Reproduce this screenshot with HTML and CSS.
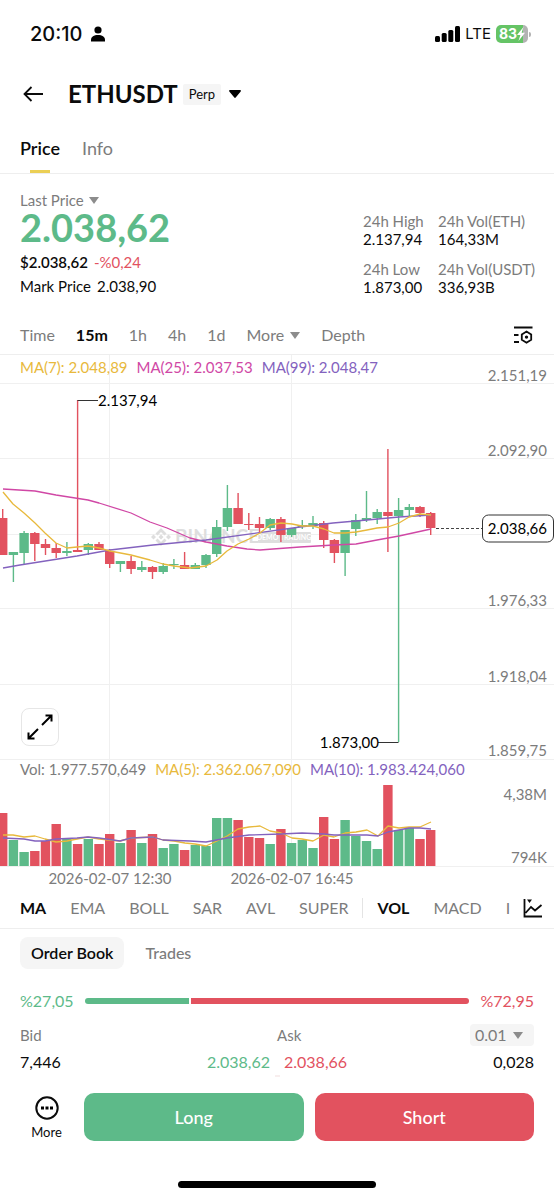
FILE: index.html
```html
<!DOCTYPE html>
<html lang="en">
<head>
    <meta charset="UTF-8">
    <meta name="viewport" content="width=device-width, initial-scale=1.0">
    <title>ETHUSDT Perp</title>
    <link rel="stylesheet" href="styles.css">
</head>
<body>
    <div class="status-bar">
        <div class="status-left">
            <span class="clock">20:10</span>
            <svg width="14" height="16" viewBox="0 0 14 16"><circle cx="7" cy="4" r="3.6"/><path d="M0 15.4V14c0-3 3-4.900 7-4.900s7 1.900 7 4.900v1.400z"/></svg>
        </div>
        <div class="status-right">
            <svg width="25" height="16" viewBox="0 0 25 16"><rect y="10" width="5" height="6" rx="1.500"/><rect x="6.700" y="7" width="5" height="9" rx="1.500"/><rect x="13.300" y="4" width="5" height="12" rx="1.500"/><rect x="20" width="5" height="16" rx="1.500"/></svg>
            <span class="network">LTE</span>
            <div class="battery">
                <span>83</span>
                <svg width="8" height="14" viewBox="0 0 8 14"><path d="M6.500 0L0 8h3.400L1.500 14 8 5.800H4.600z" fill="#fff"/></svg>
            </div>
            <div class="battery-tip"></div>
        </div>
    </div>

    <header class="title-bar">
        <button class="icon-btn" aria-label="Back">
            <svg width="20" height="16" viewBox="0 0 20 16" fill="none" stroke="#0b0b0b" stroke-width="1.800"><path d="M20 8H1.500M8.500 1L1.500 8l7 7"/></svg>
        </button>
        <h1>ETHUSDT</h1>
        <span class="perp">Perp</span>
        <button class="icon-btn" aria-label="Change pair">
            <svg width="12" height="8" viewBox="0 0 12 8"><path d="M1 0h10c.9 0 1.200.8.7 1.400L6.700 7.500c-.4.500-1 .5-1.400 0L.3 1.400C-.2.800.1 0 1 0z"/></svg>
        </button>
    </header>

    <nav class="tabs">
        <a href="#price" class="tab active">Price</a>
        <a href="#info" class="tab">Info</a>
    </nav>

    <section class="summary" id="price">
        <div class="price-block">
            <button class="last-label">Last Price
                <svg class="caret" width="10" height="7" viewBox="0 0 10 7"><path d="M0 0h10L5 7z"/></svg>
            </button>
            <div class="last-price">2.038,62</div>
            <div class="fiat"><b>$2.038,62</b> <span class="down">-%0,24</span></div>
            <div class="mark"><span>Mark Price</span> <span>2.038,90</span></div>
        </div>
        <dl class="stats">
            <div><dt>24h High</dt><dd>2.137,94</dd></div>
            <div><dt>24h Vol(ETH)</dt><dd>164,33M</dd></div>
            <div><dt>24h Low</dt><dd>1.873,00</dd></div>
            <div><dt>24h Vol(USDT)</dt><dd>336,93B</dd></div>
        </dl>
    </section>

    <div class="intervals">
        <button>Time</button>
        <button class="active">15m</button>
        <button>1h</button>
        <button>4h</button>
        <button>1d</button>
        <button>More
            <svg class="caret" width="10" height="7" viewBox="0 0 10 7"><path d="M0 0h10L5 7z"/></svg>
        </button>
        <button>Depth</button>
        <button class="settings" aria-label="Chart settings">
            <svg width="20" height="18" viewBox="0 0 20 18" fill="none" stroke="#0b0b0b" stroke-width="1.800"><path d="M1 1.500h18.500M1 9h4.500M1 16h5M13.500 5.500l4.700 2.900v5.400l-4.700 2.900-4.700-2.900V8.400z"/><circle cx="13.500" cy="11.100" r="1.700" fill="#0b0b0b" stroke="none"/></svg>
        </button>
    </div>

    <section class="chart">
        <svg id="chart" viewBox="0 355 554 535">
            <g id="grid"></g>
            <g class="watermark">
                <path d="M155.500 533.500l5.500-5.500 5.500 5.500-2 2-3.500-3.500-3.500 3.500zM155.500 540.500l5.500 5.500 5.500-5.500-2-2-3.500 3.500-3.500-3.500zM153.500 534.500l2.500 2.500-2.500 2.500-2.500-2.500zM168.500 534.500l2.500 2.500-2.500 2.500-2.500-2.500zM161 534.500l2.500 2.500-2.500 2.500-2.500-2.500z"/>
                <text x="175" y="543" class="wm-name">BINANCE</text>
                <rect x="258" y="532" width="53" height="11" rx="1"/>
                <text x="284" y="540" text-anchor="middle" class="wm-tag">DEMO TRADING</text>
            </g>
            <g id="candles"></g>
            <g id="volume"></g>
            <g id="lines"></g>
            <g class="callout">
                <path d="M77.500 400.500H98M378 742.500h20.500"/>
                <text x="98" y="406">2.137,94</text>
                <text x="379" y="748" text-anchor="end">1.873,00</text>
            </g>
            <g class="axis">
                <text x="547" y="381">2.151,19</text>
                <text x="547" y="456">2.092,90</text>
                <text x="547" y="606">1.976,33</text>
                <text x="547" y="682">1.918,04</text>
                <text x="547" y="756">1.859,75</text>
                <text x="547" y="800">4,38M</text>
                <text x="547" y="863">794K</text>
                <text x="110" y="884" class="mid">2026-02-07 12:30</text>
                <text x="292" y="884" class="mid">2026-02-07 16:45</text>
            </g>
            <g class="current">
                <path d="M436 528.500h46" stroke-dasharray="3 2"/>
                <rect x="482.500" y="515" width="71" height="27" rx="6"/>
                <text x="547" y="534">2.038,66</text>
            </g>
        </svg>
        <div class="legend price-legend">
            <span class="yellow">MA(7): 2.048,89</span>
            <span class="pink">MA(25): 2.037,53</span>
            <span class="purple">MA(99): 2.048,47</span>
        </div>
        <div class="legend volume-legend">
            <span>Vol: 1.977.570,649</span>
            <span class="yellow">MA(5): 2.362.067,090</span>
            <span class="purple">MA(10): 1.983.424,060</span>
        </div>
        <button class="expand" aria-label="Full screen">
            <svg width="26" height="26" viewBox="0 0 26 26" fill="none" stroke="#000" stroke-width="2"><path d="M15 11l9.500-9.500M18.500 1.500h6v6M11 15l-9.500 9.500M1.500 18.500v6h6"/></svg>
        </button>
    </section>

    <div class="indicators">
        <div class="indicator-list">
            <button class="active">MA</button>
            <button>EMA</button>
            <button>BOLL</button>
            <button>SAR</button>
            <button>AVL</button>
            <button>SUPER</button>
            <span class="divider"></span>
            <button class="active">VOL</button>
            <button>MACD</button>
            <button>I</button>
        </div>
        <button class="indicator-icon" aria-label="Indicators">
            <svg width="20" height="20" viewBox="0 0 20 20" fill="none" stroke="#0b0b0b" stroke-width="1.800"><path d="M1.500 1v17.500H19M2.500 15l5.500-6 4 3.500L18.500 7"/><path d="M4 1.500h5L6.500 5z" fill="#0b0b0b" stroke="none"/></svg>
        </button>
    </div>

    <section class="book">
        <div class="book-tabs">
            <button class="active">Order Book</button>
            <button>Trades</button>
        </div>
        <div class="ratio">
            <span class="up">%27,05</span>
            <div class="ratio-bar">
                <div class="ratio-bid" style="width: 27.05%"></div>
                <div class="ratio-ask"></div>
            </div>
            <span class="down">%72,95</span>
        </div>
        <table class="orders">
            <thead>
                <tr>
                    <th colspan="2">Bid</th>
                    <th>Ask</th>
                    <th class="num">
                        <div class="step">
                            <select aria-label="Price step"><option>0.01</option></select>
                            <svg class="caret" width="10" height="7" viewBox="0 0 10 7"><path d="M0 0h10L5 7z"/></svg>
                        </div>
                    </th>
                </tr>
            </thead>
            <tbody>
                <tr>
                    <td>7,446</td>
                    <td class="num bid-price up">2.038,62</td>
                    <td class="ask-price down">2.038,66</td>
                    <td class="num">0,028</td>
                </tr>
            </tbody>
        </table>
        <div class="depth-bar"></div>
    </section>

    <footer class="actions">
        <button class="more">
            <svg width="24" height="24" viewBox="0 0 24 24"><circle cx="12" cy="12" r="10.700" fill="none" stroke="#0b0b0b" stroke-width="2"/><path d="M6 10.500h3v3H6zM10.500 10.500h3v3h-3zM15 10.500h3v3h-3z"/></svg>
            More
        </button>
        <button class="trade long">Long</button>
        <button class="trade short">Short</button>
    </footer>
    <div class="home-bar"></div>

    <script src="chart.js"></script>
</body>
</html>
```

FILE: styles.css
```css
* {
    box-sizing: border-box;
}
body {
    font-family: Lato, 'Liberation Sans', sans-serif;
    font-size: 15px;
    line-height: 18px;
    margin: 0;
    background: #fff;
    color: #0b0b0b;
}
button, select {
    font: inherit;
    color: inherit;
    background: none;
    border: none;
    padding: 0;
    cursor: pointer;
}
svg {
    display: block;
    flex: none;
}
.up {
    color: #5dba89;
}
.down {
    color: #e2525f;
}
.yellow {
    color: #e8b93c;
}
.pink {
    color: #d047a5;
}
.purple {
    color: #8362be;
}
.caret {
    fill: #8c8c8c;
}

/* status bar */
.status-bar {
    display: flex;
    justify-content: space-between;
    align-items: center;
    height: 68px;
    padding: 0 23px 0 30px;
}
.status-left, .status-right {
    display: flex;
    align-items: center;
}
.status-left {
    gap: 8px;
}
.clock {
    font-family: Inter, sans-serif;
    font-size: 20px;
    font-weight: 500;
}
.network {
    font-family: Inter, sans-serif;
    font-size: 15px;
    margin: 0 5px;
}
.battery {
    display: flex;
    align-items: center;
    justify-content: center;
    height: 18px;
    width: 32px;
    border-radius: 5px;
    background: linear-gradient(to right, #65c466 83%, #b3b3b3 83%);
    color: #fff;
    font-family: Inter, sans-serif;
    font-size: 14px;
    font-weight: 700;
}
.battery-tip {
    width: 2px;
    height: 5px;
    margin-left: 1px;
    border-radius: 0 2px 2px 0;
    background: #b3b3b3;
}

/* title */
.title-bar {
    display: flex;
    align-items: center;
    height: 52px;
    padding: 0 23px;
}
h1 {
    font-size: 24px;
    font-weight: 700;
    line-height: 28px;
    margin: 0 5px 0 25px;
}
.perp {
    font-size: 13px;
    line-height: 21px;
    padding: 0 6px;
    margin-right: 8px;
    border-radius: 2px;
    background: #f5f5f5;
}
.tabs {
    display: flex;
    gap: 22px;
    padding: 16px 20px 0;
    border-bottom: 1px solid #eee;
}
.tab {
    position: relative;
    height: 37px;
    font-size: 18px;
    line-height: 24px;
    color: #7c7c7c;
    text-decoration: none;
}
.tab.active {
    color: #0b0b0b;
    font-weight: 600;
}
.tab.active::after {
    content: '';
    position: absolute;
    left: 25%;
    right: 25%;
    bottom: 0;
    height: 3px;
    background: #ebcf55;
}

/* price summary */
.summary {
    display: flex;
    justify-content: space-between;
    padding: 17px 20px 18px;
}
.last-label {
    display: flex;
    align-items: center;
    gap: 5px;
    color: #7c7c7c;
}
.last-price {
    font-size: 38px;
    font-weight: 700;
    line-height: 36px;
    margin-bottom: 5px;
    color: #5dba89;
}
.fiat, .mark {
    display: flex;
    gap: 6px;
    line-height: 24px;
}
.fiat b {
    font-weight: 600;
}
.stats {
    display: grid;
    grid-template-columns: 58px 96px;
    gap: 12px 17px;
    margin: 21px 0 0;
    align-content: start;
    white-space: nowrap;
}
.stats dt {
    color: #7c7c7c;
}
.stats dd {
    margin: 0;
}

/* interval row */
.intervals {
    display: flex;
    align-items: center;
    gap: 21px;
    height: 39px;
    padding: 0 21px 0 20px;
    border-bottom: 1px solid #eee;
    font-size: 16px;
    color: #7c7c7c;
}
.intervals button {
    display: flex;
    align-items: center;
    gap: 6px;
}
.intervals .active {
    color: #0b0b0b;
    font-weight: 700;
}
.intervals .settings {
    margin-left: auto;
}

/* chart */
.chart {
    position: relative;
}
#chart {
    width: 100%;
    height: auto;
}
#grid path {
    stroke: #f0f0f0;
    fill: none;
}
#lines path {
    fill: none;
    stroke-width: 1.3;
    stroke-linejoin: round;
}
.watermark {
    fill: #dedede;
}
.wm-name {
    font-size: 19px;
    font-weight: 700;
}
.wm-tag {
    font-size: 7px;
    font-weight: 700;
    fill: #fff;
}
.callout path {
    stroke: #333;
}
.axis text {
    fill: #7c7c7c;
    text-anchor: end;
}
.axis .mid {
    text-anchor: middle;
}
.current path {
    stroke: #444;
}
.current rect {
    fill: #fff;
    stroke: #333;
}
.current text {
    text-anchor: end;
}
.legend {
    position: absolute;
    left: 20px;
    display: flex;
    gap: 9px;
    color: #7c7c7c;
    white-space: nowrap;
}
.legend .yellow {
    color: #e8b93c;
}
.legend .pink {
    color: #d047a5;
}
.legend .purple {
    color: #8362be;
}
.price-legend {
    top: 3px;
}
.volume-legend {
    bottom: 112px;
}
.expand {
    position: absolute;
    left: 21px;
    bottom: 144px;
    display: flex;
    align-items: center;
    justify-content: center;
    width: 38px;
    height: 38px;
    border: 1px solid #e6e6e6;
    border-radius: 8px;
    background: #fff;
}

/* indicators */
.indicators {
    display: flex;
    align-items: center;
    height: 39px;
    padding-bottom: 2px;
    border-bottom: 1px solid #eee;
    font-size: 16px;
    color: #7c7c7c;
}
.indicator-list {
    flex: 1;
    display: flex;
    align-items: center;
    gap: 24px;
    padding-left: 20px;
    overflow: hidden;
}
.indicator-list .active {
    color: #0b0b0b;
    font-weight: 700;
}
.divider {
    width: 1px;
    height: 20px;
    margin: 0 -10px;
    background: #e4e4e4;
}
.indicator-icon {
    padding: 0 11px 0 12px;
}

/* order book */
.book {
    padding: 8px 20px 0;
}
.book-tabs {
    display: flex;
    gap: 10px;
    font-size: 16px;
    color: #7c7c7c;
}
.book-tabs button {
    padding: 0 11px;
    line-height: 32px;
    border-radius: 8px;
    font-weight: 500;
}
.book-tabs .active {
    background: #f5f5f5;
    color: #0b0b0b;
    font-weight: 600;
}
.ratio {
    display: flex;
    align-items: center;
    gap: 11px;
    height: 24px;
    margin-top: 20px;
    font-size: 16px;
}
.ratio-bar {
    flex: 1;
    display: flex;
    gap: 2px;
    height: 6px;
}
.ratio-bid {
    background: #5dba89;
    border-radius: 3px 0 0 3px;
}
.ratio-ask {
    flex: 1;
    background: #e2525f;
    border-radius: 0 3px 3px 0;
}
.orders {
    width: 100%;
    margin-top: 8px;
    table-layout: fixed;
    border-collapse: collapse;
    font-size: 16px;
}
.orders th, .orders td {
    height: 27px;
    padding: 0;
    text-align: left;
}
.orders th {
    font-size: 15px;
    font-weight: 400;
    color: #7c7c7c;
}
.orders .num {
    text-align: right;
}
.orders .bid-price {
    padding-right: 7px;
}
.orders .ask-price {
    padding-left: 7px;
}
.step {
    position: relative;
    display: inline-block;
    vertical-align: middle;
}
.step select {
    appearance: none;
    display: block;
    width: 64px;
    height: 22px;
    padding-left: 5px;
    border-radius: 4px;
    background: #f5f5f5;
    font-size: 16px;
}
.step .caret {
    position: absolute;
    right: 11px;
    top: 8px;
    pointer-events: none;
}
.depth-bar {
    width: 5px;
    height: 2px;
    margin: 0 auto;
    background: #f8eeee;
}

/* bottom actions */
.actions {
    display: flex;
    gap: 11px;
    padding: 16px 20px 40px;
}
.more {
    display: flex;
    flex-direction: column;
    align-items: center;
    gap: 3px;
    width: 53px;
    padding-top: 3px;
    font-size: 13px;
}
.trade {
    flex: 1;
    height: 48px;
    border-radius: 10px;
    color: #fff;
    font-size: 18px;
    font-weight: 500;
}
.long {
    background: #5dba89;
}
.short {
    background: #e2525f;
}
.home-bar {
    width: 198px;
    height: 7px;
    margin: 0 auto;
    border-radius: 4px;
    background: #000;
}
```

FILE: chart.js
```js
const GREEN = '#5dba89';
const RED = '#e2525f';
const YELLOW = '#e8b93c';
const PINK = '#d047a5';
const PURPLE = '#8362be';

const START = 2.7;
const STEP = 10.7;
const BODY = 9.4;
const VOLUME_BASE = 866;

// color, body top, body bottom, wick top, wick bottom, volume top
const candles = [
    ['r', 518, 555, 509, 555, 813],
    ['g', 552, 555, 552, 582, 840],
    ['g', 533, 553, 531, 565, 852],
    ['r', 533, 544, 532, 561, 851],
    ['r', 544, 548, 539, 555, 841],
    ['r', 548, 553, 543, 558, 824],
    ['g', 551, 553, 542, 556, 839],
    ['r', 550, 552, 400, 552, 844],
    ['g', 544, 550, 543, 555, 839],
    ['r', 544, 550, 542, 550, 844],
    ['r', 551, 564, 549, 568, 834],
    ['g', 561, 564, 561, 572, 843],
    ['r', 561, 569, 556, 574, 830],
    ['g', 567, 570, 561, 572, 843],
    ['r', 567, 572, 566, 579, 834],
    ['g', 566, 572, 563, 574, 848],
    ['g', 564, 565, 559, 569, 844],
    ['r', 565, 569, 552, 569, 850],
    ['g', 565, 569, 563, 569, 845],
    ['g', 555, 565, 554, 568, 846],
    ['g', 527, 554, 520, 557, 818],
    ['g', 508, 527, 485, 531, 818],
    ['r', 508, 524, 493, 524, 820],
    ['r', 524, 525, 513, 530, 837],
    ['r', 524, 528, 517, 532, 838],
    ['g', 519, 528, 518, 530, 844],
    ['r', 519, 535, 517, 542, 829],
    ['g', 528, 535, 528, 537, 843],
    ['g', 525, 527, 520, 529, 840],
    ['g', 523, 526, 516, 529, 848],
    ['r', 523, 540, 521, 548, 817],
    ['r', 540, 553, 539, 563, 839],
    ['g', 530, 553, 530, 576, 820],
    ['g', 520, 529, 514, 536, 836],
    ['g', 518, 520, 491, 522, 841],
    ['g', 512, 518, 509, 524, 849],
    ['r', 512, 516, 449, 552, 785],
    ['g', 510, 516, 498, 742, 830],
    ['g', 507, 510, 504, 516, 828],
    ['r', 507, 513, 506, 517, 839],
    ['r', 513, 528, 512, 535, 830]
];

const ma25 = [[3, 489], [35, 491], [56, 495], [88, 500], [99, 503], [131, 513], [150, 522], [167, 528], [190, 538], [206, 542], [227, 546], [247, 549], [260, 550], [273, 549], [300, 547], [317, 546], [334, 545], [356, 544], [377, 540], [399, 536], [431, 529]];
const ma99 = [[3, 568], [20, 565], [77, 556], [110, 550], [153, 545], [206, 540], [300, 527], [333, 523], [367, 520], [399, 517], [431, 515]];
const ma7 = [[3, 492], [13, 504], [24, 513], [35, 523], [45, 533], [56, 543], [67, 548], [77, 547], [88, 546], [99, 548], [110, 551], [131, 555], [150, 560], [163, 564], [174, 566], [190, 568], [206, 566], [217, 560], [227, 551], [238, 544], [249, 539], [260, 533], [270, 525], [281, 523], [292, 524], [302, 526], [313, 526], [324, 529], [334, 533], [345, 533], [356, 532], [367, 530], [377, 528], [388, 527], [399, 523], [409, 517], [420, 514], [431, 515]];
const vol5 = [[3, 835], [13, 835], [24, 837], [35, 836], [45, 839], [56, 842], [67, 841], [77, 839], [88, 837], [99, 839], [120, 841], [131, 838], [153, 837], [163, 840], [174, 841], [185, 843], [195, 844], [206, 846], [217, 841], [227, 836], [238, 829], [249, 827], [260, 826], [270, 831], [281, 833], [292, 838], [302, 839], [313, 841], [324, 835], [334, 837], [345, 833], [356, 832], [367, 830], [378, 836], [388, 826], [399, 828], [409, 827], [420, 827], [431, 822]];
const vol10 = [[3, 838], [24, 839], [35, 841], [45, 841], [56, 839], [77, 838], [88, 837], [99, 838], [120, 841], [131, 838], [153, 837], [163, 840], [190, 841], [206, 842], [227, 838], [249, 835], [281, 834], [302, 833], [324, 834], [334, 835], [367, 835], [378, 836], [388, 832], [399, 830], [409, 828], [420, 828], [431, 829]];

function add(groupId, tag, attrs) {
    const el = document.createElementNS('http://www.w3.org/2000/svg', tag);
    for (const key in attrs) {
        el.setAttribute(key, attrs[key]);
    }
    document.getElementById(groupId).appendChild(el);
}

function drawLine(points, color) {
    add('lines', 'path', { d: 'M' + points.map(p => p.join(' ')).join('L'), stroke: color });
}

[383, 458, 534, 608, 684, 759, 866].forEach(y => {
    add('grid', 'path', { d: `M0 ${y + 0.5}H554` });
});
[109, 291].forEach(x => {
    add('grid', 'path', { d: `M${x + 0.5} 355V866` });
});

candles.forEach(([color, top, bottom, high, low, volume], i) => {
    const x = START + i * STEP;
    const fill = color === 'g' ? GREEN : RED;
    add('candles', 'rect', { x: x - 0.7, y: high, width: 1.4, height: low - high, fill });
    add('candles', 'rect', { x: x - BODY / 2, y: top, width: BODY, height: bottom - top, fill });
    add('volume', 'rect', { x: x - BODY / 2, y: volume, width: BODY, height: VOLUME_BASE - volume, fill });
});

drawLine(ma25, PINK);
drawLine(ma99, PURPLE);
drawLine(ma7, YELLOW);
drawLine(vol5, YELLOW);
drawLine(vol10, PURPLE);
```
